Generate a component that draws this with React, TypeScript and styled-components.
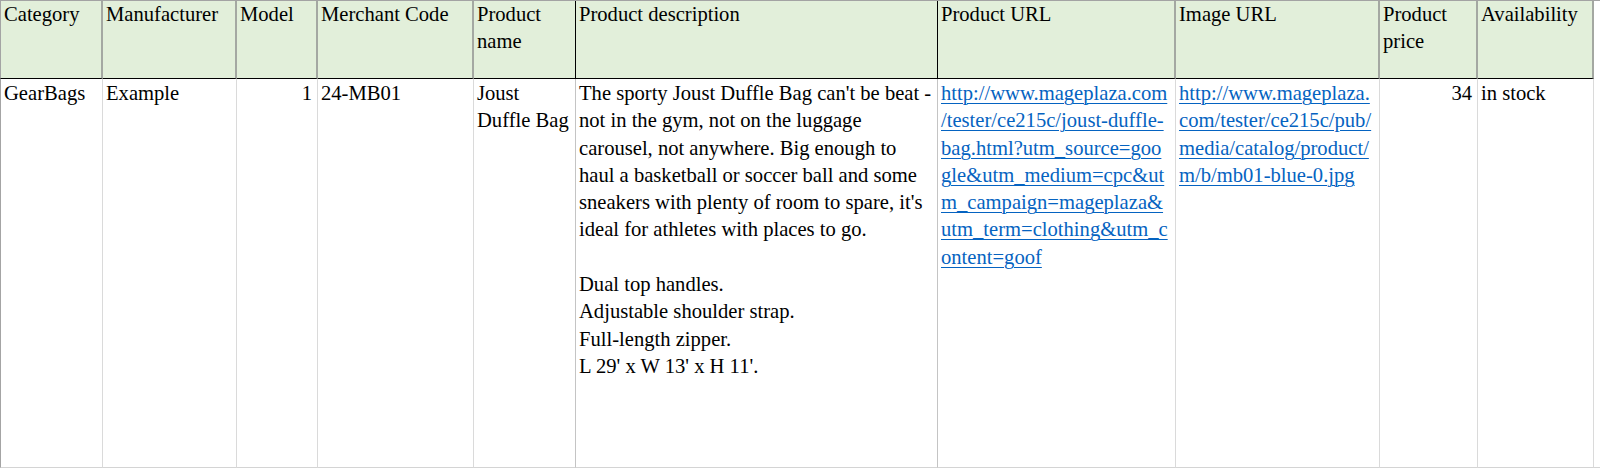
import React from 'react';
import styled, { createGlobalStyle } from 'styled-components';

const GlobalStyle = createGlobalStyle`
  html, body {
    margin: 0;
    padding: 0;
    background: #ffffff;
  }
  body {
    font-family: 'Liberation Serif', 'Times New Roman', serif;
    color: #000000;
  }
`;

const Sheet = styled.div`
  display: grid;
  grid-template-columns: 103px 134px 81px 156px 102px 362px 238px 204px 98px 116px 1fr;
  grid-template-rows: 78px 389px;
  width: 1600px;
  border-top: 1px solid #a3a3a3;
  box-sizing: border-box;
  font-size: 20.6px;
  line-height: 27.3px;
`;

const HeadCell = styled.div<{ $dark?: boolean; $first?: boolean }>`
  box-sizing: border-box;
  background: #e2efda;
  padding: 0 3px;
  border-bottom: 1px solid #000000;
  border-right: ${(p) => (p.$dark ? '1px solid #000000' : '2px solid #a4a8a2')};
  border-left: ${(p) => (p.$first ? '1px solid #a4a4a4' : 'none')};
  overflow: hidden;
`;

const Filler = styled.div<{ $body?: boolean }>`
  background: #ffffff;
  border-bottom: ${(p) => (p.$body ? '1px solid #d4d4d4' : 'none')};
`;

const BodyCell = styled.div<{ $align?: 'left' | 'right'; $dark?: boolean; $first?: boolean }>`
  box-sizing: border-box;
  padding: 1px 3px 0 3px;
  padding-right: ${(p) => (p.$align === 'right' ? '5px' : '3px')};
  text-align: ${(p) => p.$align ?? 'left'};
  border-right: 1px solid ${(p) => (p.$dark ? '#c4c4c4' : '#dadada')};
  border-left: ${(p) => (p.$first ? '1px solid #a4a4a4' : 'none')};
  border-bottom: 1px solid #d4d4d4;
  overflow: hidden;
`;

const Line = styled.span`
  display: block;
  white-space: pre;
  min-height: 27.3px;
`;

const Link = styled.a`
  color: #0563c1;
  text-decoration: underline;
  text-decoration-thickness: 1px;
  text-underline-offset: 3px;
`;

const headers: { label: string; dark?: boolean }[] = [
  { label: 'Category' },
  { label: 'Manufacturer' },
  { label: 'Model' },
  { label: 'Merchant Code' },
  { label: 'Product name', dark: true },
  { label: 'Product description', dark: true },
  { label: 'Product URL' },
  { label: 'Image URL' },
  { label: 'Product price' },
  { label: 'Availability' },
];

const description = [
  "The sporty Joust Duffle Bag can't be beat -",
  'not in the gym, not on the luggage',
  'carousel, not anywhere. Big enough to',
  'haul a basketball or soccer ball and some',
  "sneakers with plenty of room to spare, it's",
  'ideal for athletes with places to go.',
  '',
  'Dual top handles.',
  'Adjustable shoulder strap.',
  'Full-length zipper.',
  "L 29' x W 13' x H 11'.",
];

const productUrl = [
  'http://www.mageplaza.com',
  '/tester/ce215c/joust-duffle-',
  'bag.html?utm_source=goo',
  'gle&utm_medium=cpc&ut',
  'm_campaign=mageplaza&',
  'utm_term=clothing&utm_c',
  'ontent=goof',
];

const imageUrl = [
  'http://www.mageplaza.',
  'com/tester/ce215c/pub/',
  'media/catalog/product/',
  'm/b/mb01-blue-0.jpg',
];

const Lines = ({ lines, link }: { lines: string[]; link?: string }) => (
  <>
    {lines.map((text, i) => (
      <Line key={i}>{text ? link ? <Link href={link}>{text}</Link> : text : '\u00a0'}</Line>
    ))}
  </>
);

export default function App() {
  return (
    <>
      <GlobalStyle />
      <Sheet>
        {headers.map((h, i) => (
          <HeadCell key={h.label} $dark={h.dark} $first={i === 0}>
            {h.label}
          </HeadCell>
        ))}
        <Filler />

        <BodyCell $first>GearBags</BodyCell>
        <BodyCell>Example</BodyCell>
        <BodyCell $align='right'>1</BodyCell>
        <BodyCell>24-MB01</BodyCell>
        <BodyCell $dark>Joust Duffle Bag</BodyCell>
        <BodyCell $dark>
          <Lines lines={description} />
        </BodyCell>
        <BodyCell>
          <Lines lines={productUrl} link={productUrl.join('')} />
        </BodyCell>
        <BodyCell>
          <Lines lines={imageUrl} link={imageUrl.join('')} />
        </BodyCell>
        <BodyCell $align='right'>34</BodyCell>
        <BodyCell>in stock</BodyCell>
        <Filler $body />
      </Sheet>
    </>
  );
}
